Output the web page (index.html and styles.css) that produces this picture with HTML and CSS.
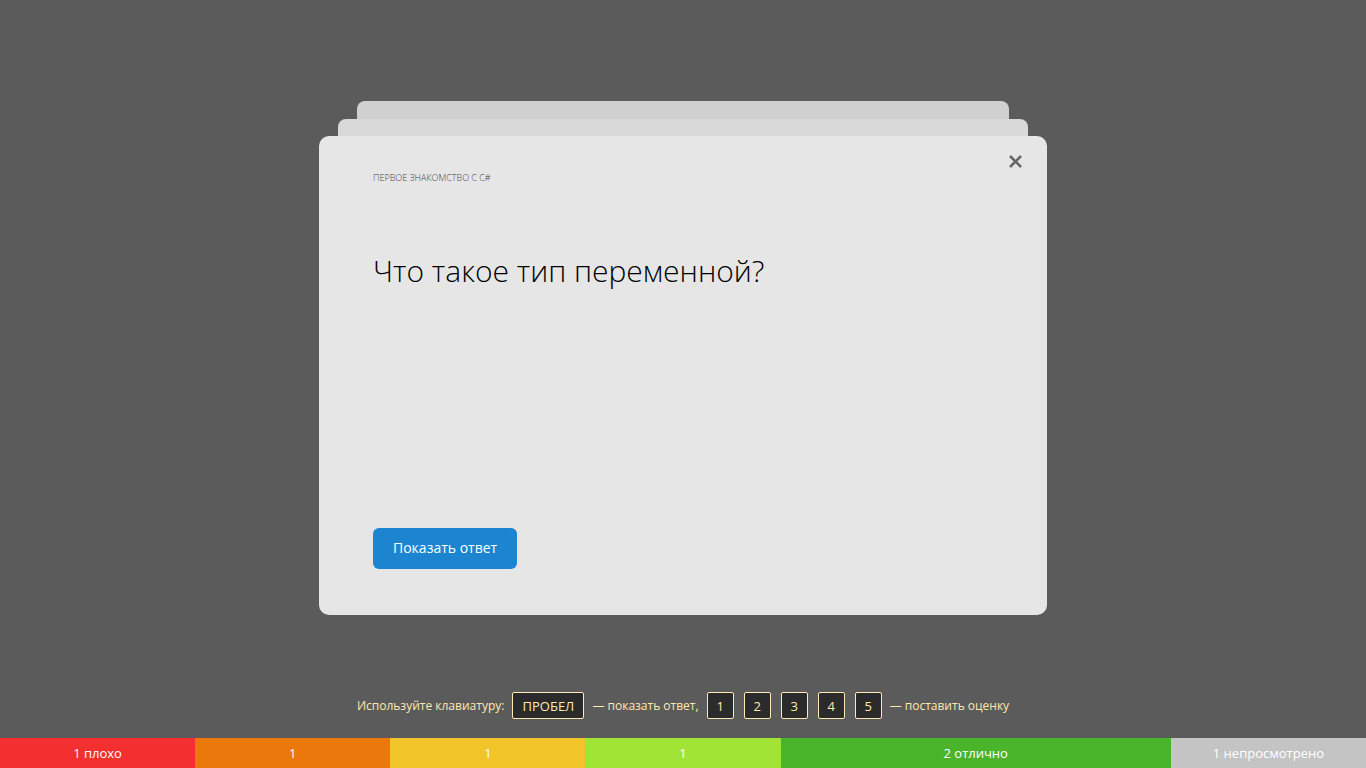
FILE: index.html
```html
<!DOCTYPE html>
<html lang="ru">
<head>
<meta charset="utf-8">
<meta name="viewport" content="width=device-width, initial-scale=1">
<title>Карточки</title>
<link rel="stylesheet" href="styles.css">
</head>
<body>
<main class="stage">
  <section class="deck">
    <div class="sheet sheet-back"></div>
    <div class="sheet sheet-middle"></div>
    <article class="card">
      <button class="close" type="button" aria-label="Закрыть">
        <svg viewBox="0 0 14 14" width="14" height="14" aria-hidden="true"><path d="M2 2l11 11M13 2L2 13"/></svg>
      </button>
      <p class="topic">ПЕРВОЕ ЗНАКОМСТВО С C#</p>
      <h1 class="question">Что такое тип переменной?</h1>
      <button class="answer" type="button">Показать ответ</button>
    </article>
  </section>
  <p class="hint">
    <span>Используйте клавиатуру:</span>
    <kbd class="key key-space">ПРОБЕЛ</kbd>
    <span>— показать ответ,</span>
    <span class="keys"><kbd class="key">1</kbd><kbd class="key">2</kbd><kbd class="key">3</kbd><kbd class="key">4</kbd><kbd class="key">5</kbd></span>
    <span>— поставить оценку</span>
  </p>
</main>
<footer class="scores">
  <div class="score score-1">1 плохо</div>
  <div class="score score-2">1</div>
  <div class="score score-3">1</div>
  <div class="score score-4">1</div>
  <div class="score score-5">2 отлично</div>
  <div class="score score-new">1 непросмотрено</div>
</footer>
</body>
</html>
```
FILE: styles.css
```css
* { box-sizing: border-box; }
body {
  margin: 0;
  min-height: 100vh;
  display: flex;
  flex-direction: column;
  background: #5b5b5b;
  font-family: "Open Sans", "Noto Sans", sans-serif;
}
.stage {
  flex: 1;
  display: flex;
  flex-direction: column;
  align-items: center;
  padding: 101px 16px 19px;
}
.deck {
  width: 100%;
  max-width: 728px;
  display: flex;
  flex-direction: column;
  align-items: center;
}
.sheet { height: 18px; border-radius: 8px 8px 0 0; }
.sheet-back { width: 652px; max-width: 90%; background: #d0d0d0; }
.sheet-middle { width: 690px; max-width: 95%; height: 17px; background: #d9d9d9; }
.card {
  position: relative;
  width: 100%;
  min-height: 479px;
  display: flex;
  flex-direction: column;
  align-items: flex-start;
  padding: 35px 54px 46px;
  border-radius: 10px;
  background: #e6e6e6;
}
.close {
  position: absolute;
  top: 11px;
  right: 18px;
  display: flex;
  padding: 7px;
  border: 0;
  background: none;
}
.close svg { fill: none; stroke: #666; stroke-width: 2.6; overflow: visible; }
.topic {
  margin: 0;
  font-size: 9px;
  line-height: 14px;
  font-weight: 300;
  color: #444;
}
.question {
  margin: 66px 0 auto;
  font-size: 30px;
  line-height: 40px;
  font-weight: 300;
  color: #000;
}
.answer {
  height: 41px;
  padding: 0 20px 2px;
  border: 0;
  border-radius: 6px;
  background: #1d85d0;
  color: #fff;
  font: 400 14px "Open Sans", "Noto Sans", sans-serif;
}
.hint {
  display: flex;
  flex-wrap: wrap;
  align-items: center;
  justify-content: center;
  gap: 8px;
  margin: auto 0 0;
  font-size: 12px;
  line-height: 20px;
  color: #ffe9b0;
}
.keys { display: flex; gap: 10px; }
.key {
  min-width: 27px;
  padding: 3px 8px 2px;
  border: 1px solid #ffe9b0;
  border-radius: 2px;
  background: #2b2b2b;
  font-family: inherit;
  font-size: 13px;
  text-align: center;
}
.key-space { min-width: 72px; }
.scores {
  display: flex;
  color: #fff;
  font-size: 13px;
  line-height: 30px;
  font-weight: 500;
  text-align: center;
}
.score { flex: 1 1 0; white-space: nowrap; }
.score-1 { background: #f3302f; }
.score-2 { background: #eb780a; }
.score-3 { background: #f1c529; }
.score-4 { background: #a1e436; }
.score-5 { flex-grow: 2; background: #4ab52b; }
.score-new { background: #c4c4c4; }
```
